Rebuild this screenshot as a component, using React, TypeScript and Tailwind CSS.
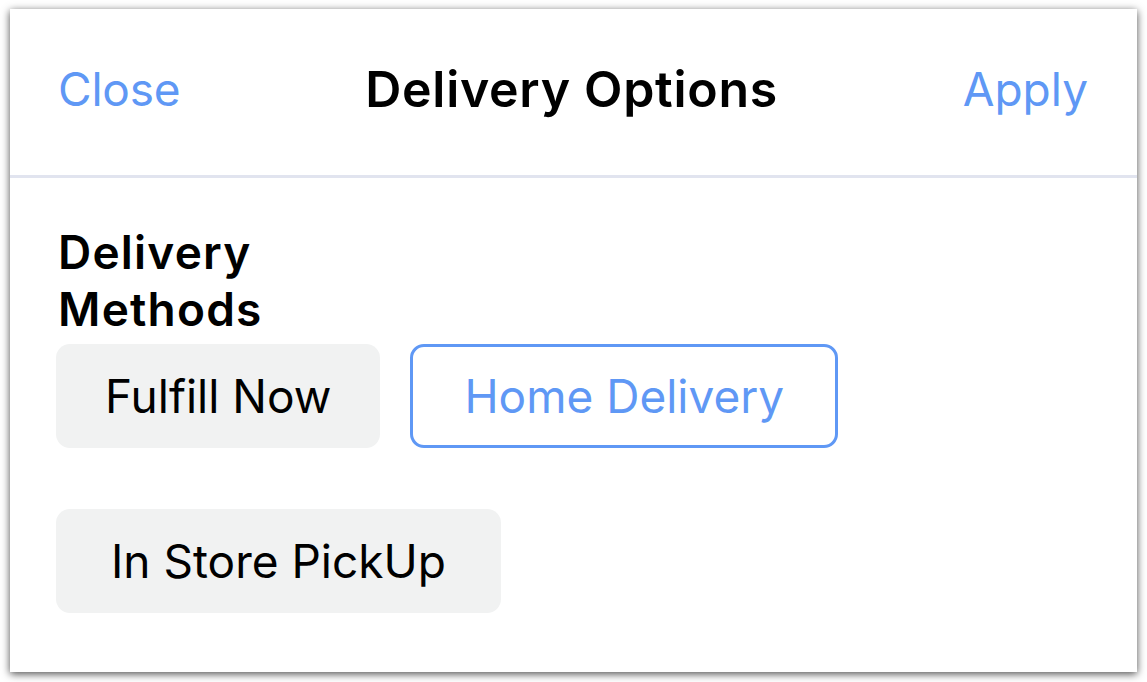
import React from "react";

export default function App() {
  return (
    <div
      className="w-[1147px] h-[682px] bg-white pt-[9px] pl-[10px] pr-[10px] pb-[10px]"
      style={{ fontFamily: "Inter, 'Noto Sans', sans-serif" }}
    >
      <div className="w-[1127px] h-[663px] bg-white shadow-[0_2px_8px_rgba(0,0,0,0.7)] flex flex-col">
        <div className="h-[166px] flex items-center justify-between pl-[48px] pr-[49px] pb-[5px]">
          <span className="text-[46px] text-[#5f98f5] tracking-[-0.2px]">Close</span>
          <span className="text-[50px] font-semibold text-black tracking-[0.7px]">Delivery Options</span>
          <span className="text-[46px] text-[#5f98f5] tracking-[0px]">Apply</span>
        </div>
        <div className="h-[3px] bg-[#e1e4ef]" />
        <div className="pl-[46px] pt-[46px]">
          <div className="w-[260px] pl-[2px] text-[46px] leading-[57px] font-semibold text-black tracking-[1.2px]">
            Delivery Methods
          </div>
          <div className="flex flex-wrap gap-x-[30px] gap-y-[61px] mt-[6px] w-[800px]">
            <button className="h-[104px] px-[49px] rounded-[14px] bg-[#f1f2f2] text-[46px] text-black">
              Fulfill Now
            </button>
            <button className="h-[104px] px-[51px] rounded-[14px] border-[3px] border-[#5f98f5] bg-white text-[46px] text-[#5f98f5]">
              Home Delivery
            </button>
            <button className="h-[104px] px-[55px] rounded-[14px] bg-[#f1f2f2] text-[46px] text-black">
              In Store PickUp
            </button>
          </div>
        </div>
      </div>
    </div>
  );
}
